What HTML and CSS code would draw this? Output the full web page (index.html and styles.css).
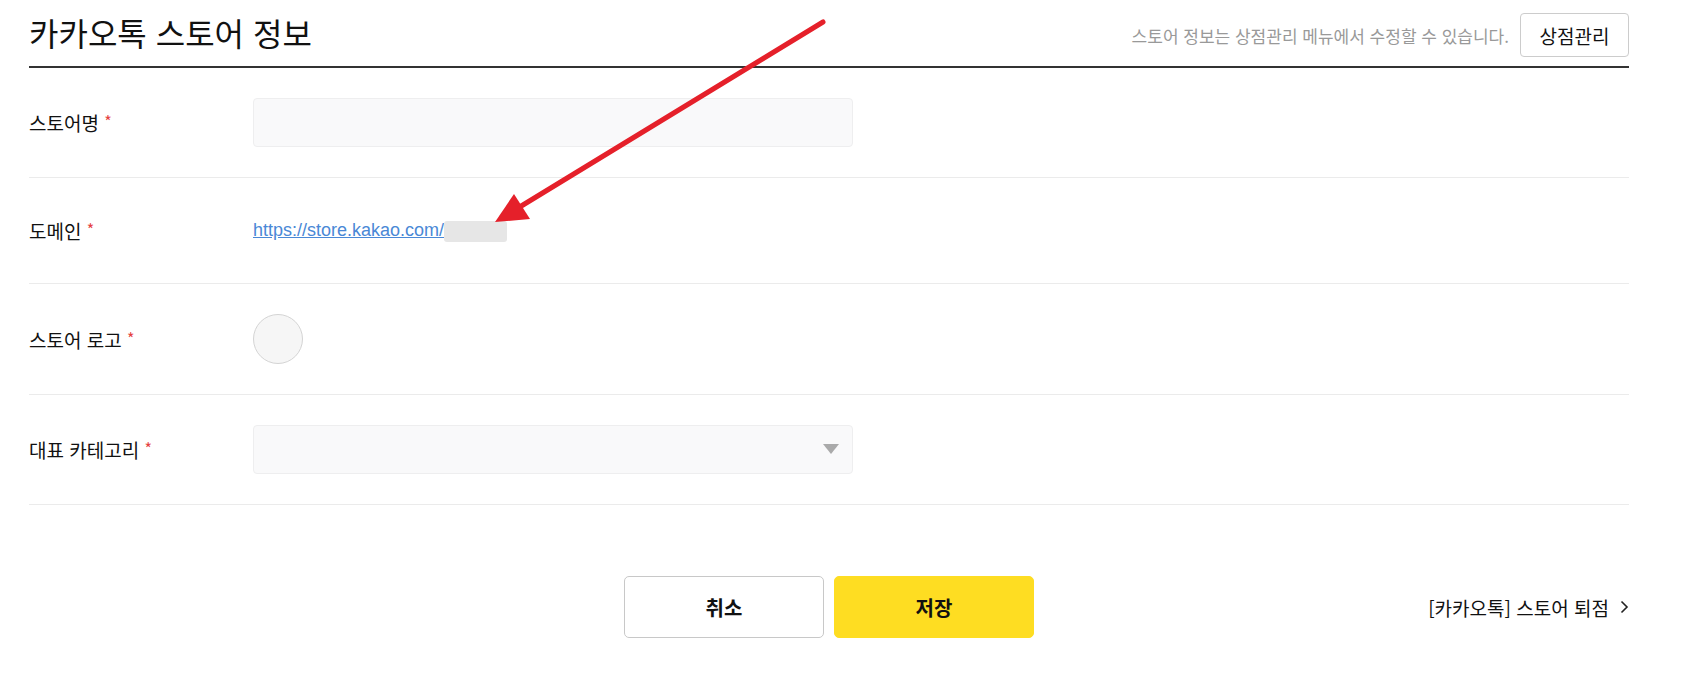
FILE: index.html
```html
<!DOCTYPE html>
<html lang="ko">
<head>
  <meta charset="UTF-8">
  <meta name="viewport" content="width=device-width, initial-scale=1.0">
  <link rel="stylesheet" href="styles.css">
  <title>카카오톡 스토어 정보</title>
</head>
<body>

  <div class="wrap">

    <div class="header">
      <h1>카카오톡 스토어 정보</h1>
      <div class="header-right">
        <span class="help">스토어 정보는 상점관리 메뉴에서 수정할 수 있습니다.</span>
        <button class="btn-small">상점관리</button>
      </div>
    </div>

    <div class="row">
      <div class="label">스토어명 <em>*</em></div>
      <div class="field"><div class="input"></div></div>
    </div>

    <div class="row row-domain">
      <div class="label">도메인 <em>*</em></div>
      <div class="field">
        <a class="domain" href="#">https://store.kakao.com/</a><span class="masked"></span>
      </div>
    </div>

    <div class="row">
      <div class="label">스토어 로고 <em>*</em></div>
      <div class="field"><div class="logo"></div></div>
    </div>

    <div class="row">
      <div class="label">대표 카테고리 <em>*</em></div>
      <div class="field">
        <div class="input select"><span class="caret"></span></div>
      </div>
    </div>

    <div class="footer">
      <div></div>
      <div class="buttons">
        <button class="btn btn-cancel">취소</button>
        <button class="btn btn-save">저장</button>
      </div>
      <a class="leave" href="#">[카카오톡] 스토어 퇴점
        <svg width="9" height="14" viewBox="0 0 9 14"><path d="M1.5 1.5l5.5 5.5-5.5 5.5" fill="none" stroke="#222" stroke-width="1.6"/></svg>
      </a>
    </div>

  </div>

  <!-- annotation arrow over the page -->
  <svg class="arrow" width="1698" height="684" viewBox="0 0 1698 684">
    <line x1="823" y1="22" x2="518" y2="208" stroke="#e5202a" stroke-width="5" stroke-linecap="round"/>
    <polygon points="495,222 514,194 530,219" fill="#e5202a"/>
  </svg>

</body>
</html>
```

FILE: styles.css
```css
body {
  margin: 0;
  font-family: 'Noto Sans CJK KR', 'Noto Sans', sans-serif;
  color: #222;
  background: #fff;
}

.wrap {
  width: 1600px;
  margin-left: 29px;
}

.header {
  display: flex;
  justify-content: space-between;
  align-items: center;
  padding: 13px 0 9px;
  border-bottom: 2px solid #333;
}

h1 {
  margin: 0;
  font-size: 32px;
  font-weight: 400;
  line-height: 38px;
  color: #111;
  align-self: flex-start;
}

.header-right {
  display: flex;
  align-items: center;
  gap: 11px;
}

.help {
  font-size: 17px;
  color: #999;
}

.btn-small {
  width: 109px;
  height: 44px;
  background: #fff;
  border: 1px solid #ccc;
  border-radius: 4px;
  font-family: inherit;
  font-size: 19px;
  color: #111;
  padding: 0;
}

.row {
  display: flex;
  align-items: center;
  padding: 30px 0;
  border-bottom: 1px solid #ebebeb;
}

.row-domain {
  padding: 29px 0 30px;
}

.label {
  width: 224px;
  font-size: 19px;
  color: #111;
}

.label em {
  font-style: normal;
  color: #e5423f;
  position: relative;
  top: -3px;
  font-size: 16px;
}

.field {
  display: flex;
  align-items: center;
  min-height: 46px;
}

.input {
  width: 598px;
  height: 47px;
  background: #f9f9fa;
  border: 1px solid #eeeeef;
  border-radius: 4px;
}

.select {
  position: relative;
}

.caret {
  position: absolute;
  right: 13px;
  top: 18px;
  width: 0;
  height: 0;
  border-left: 8px solid transparent;
  border-right: 8px solid transparent;
  border-top: 10px solid #aaa;
}

.domain {
  font-family: 'Liberation Sans', Arial, sans-serif;
  font-size: 18px;
  color: #4a88d6;
  text-decoration: underline;
}

.masked {
  display: inline-block;
  width: 63px;
  height: 21px;
  background: #e6e6e6;
  border-radius: 3px;
  margin-top: 3px;
}

.logo {
  width: 48px;
  height: 48px;
  border-radius: 50%;
  background: #f6f6f6;
  border: 1px solid #d4d4d4;
}

.footer {
  display: grid;
  grid-template-columns: 1fr auto 1fr;
  align-items: center;
  margin-top: 71px;
}

.buttons {
  display: flex;
  gap: 10px;
}

.btn {
  width: 200px;
  height: 62px;
  border-radius: 5px;
  font-family: inherit;
  font-size: 20px;
  font-weight: 700;
  color: #111;
  padding: 0;
}

.btn-cancel {
  background: #fff;
  border: 1px solid #c8c8c8;
}

.btn-save {
  background: #fedd22;
  border: 1px solid #fedd22;
}

.leave {
  justify-self: end;
  display: flex;
  align-items: center;
  gap: 11px;
  font-size: 19px;
  color: #111;
  text-decoration: none;
}

.arrow {
  position: absolute;
  left: 0;
  top: 0;
  pointer-events: none;
}
```
